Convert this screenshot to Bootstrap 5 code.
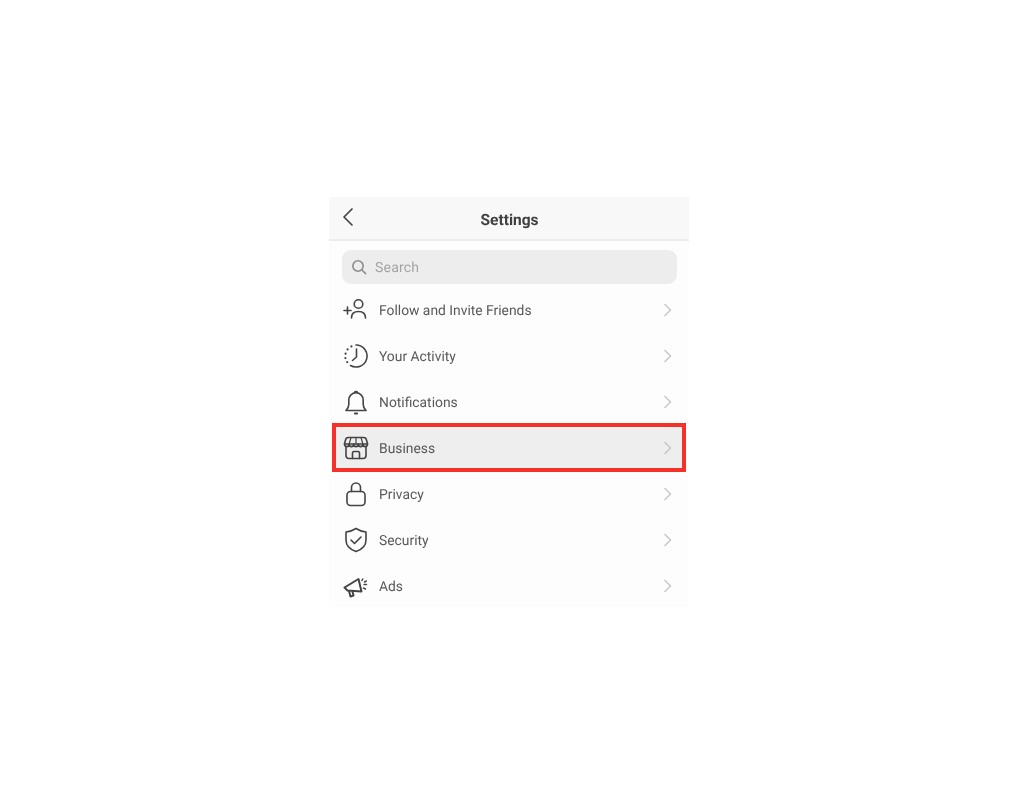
<!DOCTYPE html>
<html lang="en">

<head>
  <meta charset="UTF-8">
  <title>Settings</title>
  <link href="https://cdn.jsdelivr.net/npm/bootstrap@5.3.3/dist/css/bootstrap.min.css" rel="stylesheet">
  <style>
    body {
      background-color: #fff;
      font-family: Roboto, "Liberation Sans", sans-serif;
      text-rendering: geometricPrecision;
    }

    .page-wrap {
      padding-top: 197px;
      padding-right: 6px;
    }

    .phone {
      width: 360px;
      height: 410px;
      background-color: #fdfdfd;
      filter: blur(0.7px);
    }

    .top-bar {
      height: 44px;
      background-color: #f8f8f8;
      border-bottom: 2px solid #ececec;
      padding-left: 13px;
    }

    .top-bar .back {
      width: 12px;
      height: 20px;
      margin-top: -2px;
    }

    .top-title {
      font-size: 15.5px;
      font-weight: 700;
      color: #404040;
      margin-top: 5px;
    }

    .search-box {
      height: 34px;
      margin: 9px 12px 3px 13px;
      padding-left: 9px;
      background-color: #ededed;
      border-radius: 9px;
      color: #a5a5a5;
      font-size: 14px;
      letter-spacing: 0.2px;
    }

    .search-box span,
    .row-item span {
      padding-top: 2px;
    }

    .row-item {
      height: 46px;
      padding: 0 17px 0 14px;
      color: #595959;
      font-size: 13.85px;
    }

    .row-item .row-icon {
      width: 26px;
      height: 26px;
      margin-right: 10px;
      flex-shrink: 0;
      fill: none;
      stroke: #444;
      stroke-width: 1.6;
      stroke-linecap: round;
      stroke-linejoin: round;
    }

    .row-item .chev {
      width: 9px;
      height: 14px;
      fill: none;
      stroke: #c6c6c6;
      stroke-width: 1.4;
    }

    .row-picked {
      margin: 0 3px;
      padding: 0 14px 0 11px;
      background-color: #eeeeee;
    }

    .row-picked::after {
      content: "";
      position: absolute;
      top: -2px;
      bottom: -1px;
      left: 0;
      right: 0;
      border: 4px solid #f5312a;
    }
  </style>
</head>

<body>

  <div class="page-wrap d-flex justify-content-center">
    <div class="phone">

      <!-- Header -->
      <div class="top-bar d-flex align-items-center">
        <svg class="back" viewBox="0 0 12 20" fill="none" stroke="#444" stroke-width="1.7" stroke-linecap="round" stroke-linejoin="round">
          <path d="M10 2 2 10l8 8" />
        </svg>
        <div class="top-title flex-grow-1 text-center pe-4">Settings</div>
      </div>

      <!-- Search -->
      <div class="search-box d-flex align-items-center gap-2">
        <svg width="16" height="16" viewBox="0 0 16 16" fill="none" stroke="#8e8e8e" stroke-width="1.6" stroke-linecap="round">
          <circle cx="7" cy="7" r="5.2" />
          <path d="m11 11 3.6 3.6" />
        </svg>
        <span>Search</span>
      </div>

      <!-- Rows -->
      <div class="row-item d-flex align-items-center">
        <svg class="row-icon" viewBox="0 0 26 26">
          <path d="M1 13.500h7M4.500 10v7" />
          <circle cx="15.500" cy="7" r="4.300" />
          <path d="M8.500 21c0-4.500 3-6.500 7-6.500s7 2 7 6.500" />
        </svg>
        <span class="flex-grow-1">Follow and Invite Friends</span>
        <svg class="chev" viewBox="0 0 9 14"><path d="m1.500 1 6 6-6 6" /></svg>
      </div>

      <div class="row-item d-flex align-items-center">
        <svg class="row-icon" viewBox="0 0 26 26">
          <path d="M13 2a11 11 0 1 1-5.500 20.500" />
          <path d="M13.500 6v8l-4 3.500" />
          <path d="M8.400 3.400v.1M4.600 6.400v.1M2.600 10.600v.1M2.400 15v.1M4.200 19v.1" stroke-width="2.200" />
        </svg>
        <span class="flex-grow-1">Your Activity</span>
        <svg class="chev" viewBox="0 0 9 14"><path d="m1.500 1 6 6-6 6" /></svg>
      </div>

      <div class="row-item d-flex align-items-center">
        <svg class="row-icon" viewBox="0 0 26 26">
          <path d="M3 21.500c1.800-1.800 2.800-3.500 2.800-6V11a7.200 7.200 0 0 1 14.400 0v4.500c0 2.500 1 4.200 2.800 6z" />
          <path d="M11.500 3.500c.5-1.200 2.500-1.200 3 0" />
          <path d="M12 24.500h2" stroke-width="2.200" />
        </svg>
        <span class="flex-grow-1">Notifications</span>
        <svg class="chev" viewBox="0 0 9 14"><path d="m1.500 1 6 6-6 6" /></svg>
      </div>

      <div class="row-item row-picked position-relative d-flex align-items-center">
        <svg class="row-icon" viewBox="0 0 26 26">
          <path d="M5.500 2.500h15a3 3 0 0 1 3 2.500l1 4H1.500l1-4a3 3 0 0 1 3-2.500z" />
          <path d="M1.500 9c0 3.500 4.600 3.500 4.600 0 0 3.500 4.600 3.500 4.600 0 0 3.500 4.600 3.500 4.600 0 0 3.500 4.600 3.500 4.600 0 0 3.500 4.600 3.500 4.600 0" />
          <path d="M8 2.500 6.100 9M13 2.500V9M18 2.500 19.900 9" stroke-width="1.200" />
          <path d="M3 12.500V20.500a3 3 0 0 0 3 3h14a3 3 0 0 0 3-3v-8" />
          <path d="M9.500 23.500V18a1.500 1.500 0 0 1 1.500-1.500h4a1.500 1.500 0 0 1 1.500 1.500v5.500" />
        </svg>
        <span class="flex-grow-1">Business</span>
        <svg class="chev" viewBox="0 0 9 14"><path d="m1.500 1 6 6-6 6" /></svg>
      </div>

      <div class="row-item d-flex align-items-center">
        <svg class="row-icon" viewBox="0 0 26 26">
          <rect x="4" y="10.500" width="18" height="14" rx="3.500" />
          <path d="M8.500 10.500V6.500a4.500 4.500 0 0 1 9 0v4" />
        </svg>
        <span class="flex-grow-1">Privacy</span>
        <svg class="chev" viewBox="0 0 9 14"><path d="m1.500 1 6 6-6 6" /></svg>
      </div>

      <div class="row-item d-flex align-items-center">
        <svg class="row-icon" viewBox="0 0 26 26">
          <path d="M13 1.500c3 2 6 3 10 3.500v8c0 5.500-4 9.500-10 11.500C7 22.500 3 18.500 3 13V5C7 4.500 10 3.500 13 1.500z" />
          <path d="m8 13 3.500 3.500 6.500-6.500" />
        </svg>
        <span class="flex-grow-1">Security</span>
        <svg class="chev" viewBox="0 0 9 14"><path d="m1.500 1 6 6-6 6" /></svg>
      </div>

      <div class="row-item d-flex align-items-center">
        <svg class="row-icon" viewBox="0 0 26 26">
          <path d="M1.500 14.500 15.500 6l3 12.500-14-1z" stroke-width="2" />
          <path d="M6 18l1.500 5.500 3-1-1-4" stroke-width="2" />
          <path d="M19 7.500l.8-1.500M21 11.500h2.500M20.500 15l2 1M21.500 9l1.800-1" stroke-width="1.500" />
        </svg>
        <span class="flex-grow-1">Ads</span>
        <svg class="chev" viewBox="0 0 9 14"><path d="m1.500 1 6 6-6 6" /></svg>
      </div>

    </div>
  </div>

  <script src="https://cdn.jsdelivr.net/npm/bootstrap@5.3.3/dist/js/bootstrap.bundle.min.js"></script>
</body>

</html>
